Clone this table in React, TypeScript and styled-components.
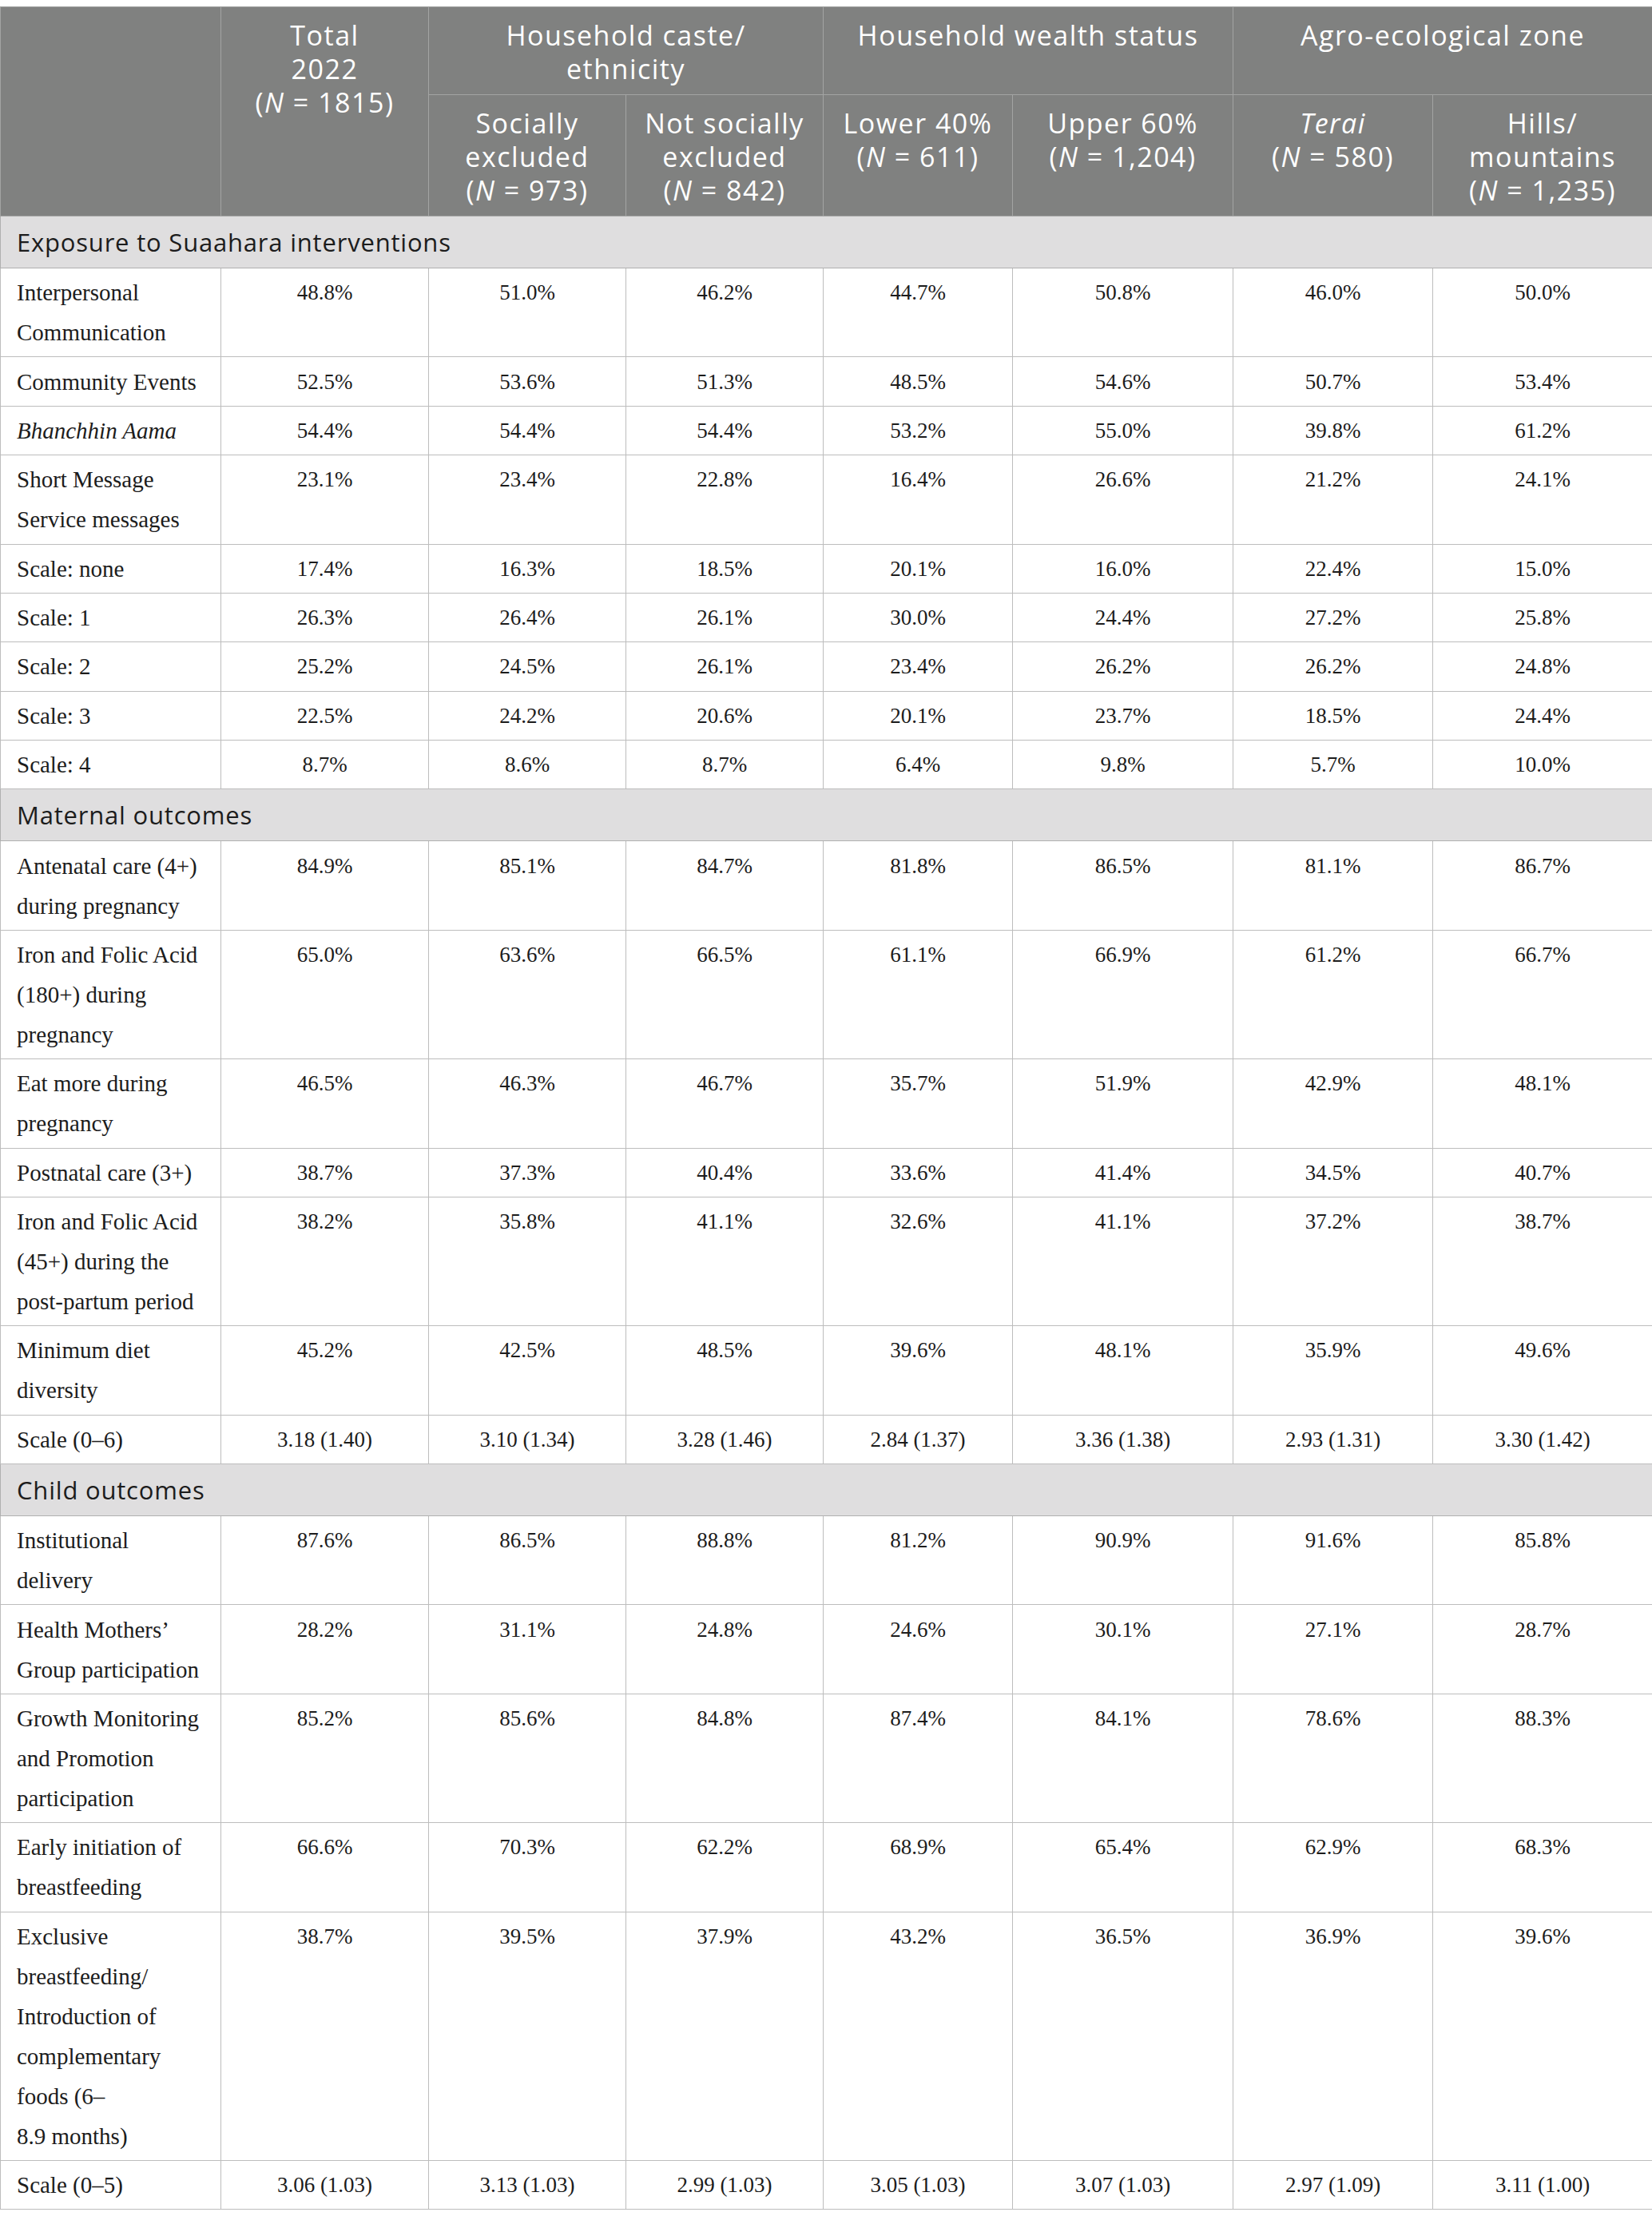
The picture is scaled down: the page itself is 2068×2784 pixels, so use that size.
import React from "react";
import styled, { createGlobalStyle } from "styled-components";

const GlobalStyle = createGlobalStyle`
  html, body {
    margin: 0;
    padding: 0;
    background: #ffffff;
  }
`;

const Page = styled.div`
  padding-top: 8px;
  width: 2068px;
`;

const Table = styled.table`
  width: 2068px;
  border-collapse: collapse;
  table-layout: fixed;
`;

const Col = styled.col<{ $w: number }>`
  width: ${(p) => p.$w}px;
`;

const HeadCell = styled.th`
  background: #808180;
  color: #ffffff;
  font-family: "Open Sans", "Noto Sans", sans-serif;
  font-weight: 400;
  font-size: 34px;
  letter-spacing: 1.5px;
  line-height: 42px;
  padding: 14px 8px 11px;
  text-align: center;
  vertical-align: top;
  border: 1px solid #a3a4a3;
`;

const SectionCell = styled.td`
  background: #dfdedf;
  color: #1c1c1c;
  font-family: "Open Sans", "Noto Sans", sans-serif;
  font-weight: 400;
  font-size: 31px;
  letter-spacing: 0.8px;
  line-height: 42px;
  padding: 11px 20px;
  text-align: left;
  vertical-align: top;
  border: 1px solid #b0b0b0;
`;

const BodyCell = styled.td<{ $label?: boolean }>`
  color: #1c1c1c;
  font-family: "Liberation Serif", "Times New Roman", serif;
  font-size: ${(p) => (p.$label ? "29px" : "27px")};
  line-height: 50px;
  padding: 5.2px 20px;
  text-align: ${(p) => (p.$label ? "left" : "center")};
  vertical-align: top;
  border: 1px solid #bdbdbd;
  background: #ffffff;
`;

const Em = styled.em`
  font-style: italic;
`;

type Row = { label: string[]; italic?: boolean; values: string[] };
type Section = { title: string; rows: Row[] };

const pct = (...v: number[]) => v.map((n) => `${n.toFixed(1)}%`);

const sections: Section[] = [
  {
    title: "Exposure to Suaahara interventions",
    rows: [
      { label: ["Interpersonal", "Communication"], values: pct(48.8, 51.0, 46.2, 44.7, 50.8, 46.0, 50.0) },
      { label: ["Community Events"], values: pct(52.5, 53.6, 51.3, 48.5, 54.6, 50.7, 53.4) },
      { label: ["Bhanchhin Aama"], italic: true, values: pct(54.4, 54.4, 54.4, 53.2, 55.0, 39.8, 61.2) },
      { label: ["Short Message", "Service messages"], values: pct(23.1, 23.4, 22.8, 16.4, 26.6, 21.2, 24.1) },
      { label: ["Scale: none"], values: pct(17.4, 16.3, 18.5, 20.1, 16.0, 22.4, 15.0) },
      { label: ["Scale: 1"], values: pct(26.3, 26.4, 26.1, 30.0, 24.4, 27.2, 25.8) },
      { label: ["Scale: 2"], values: pct(25.2, 24.5, 26.1, 23.4, 26.2, 26.2, 24.8) },
      { label: ["Scale: 3"], values: pct(22.5, 24.2, 20.6, 20.1, 23.7, 18.5, 24.4) },
      { label: ["Scale: 4"], values: pct(8.7, 8.6, 8.7, 6.4, 9.8, 5.7, 10.0) },
    ],
  },
  {
    title: "Maternal outcomes",
    rows: [
      { label: ["Antenatal care (4+)", "during pregnancy"], values: pct(84.9, 85.1, 84.7, 81.8, 86.5, 81.1, 86.7) },
      { label: ["Iron and Folic Acid", "(180+) during", "pregnancy"], values: pct(65.0, 63.6, 66.5, 61.1, 66.9, 61.2, 66.7) },
      { label: ["Eat more during", "pregnancy"], values: pct(46.5, 46.3, 46.7, 35.7, 51.9, 42.9, 48.1) },
      { label: ["Postnatal care (3+)"], values: pct(38.7, 37.3, 40.4, 33.6, 41.4, 34.5, 40.7) },
      { label: ["Iron and Folic Acid", "(45+) during the", "post-partum period"], values: pct(38.2, 35.8, 41.1, 32.6, 41.1, 37.2, 38.7) },
      { label: ["Minimum diet", "diversity"], values: pct(45.2, 42.5, 48.5, 39.6, 48.1, 35.9, 49.6) },
      {
        label: ["Scale (0\u20136)"],
        values: ["3.18 (1.40)", "3.10 (1.34)", "3.28 (1.46)", "2.84 (1.37)", "3.36 (1.38)", "2.93 (1.31)", "3.30 (1.42)"],
      },
    ],
  },
  {
    title: "Child outcomes",
    rows: [
      { label: ["Institutional", "delivery"], values: pct(87.6, 86.5, 88.8, 81.2, 90.9, 91.6, 85.8) },
      { label: ["Health Mothers\u2019", "Group participation"], values: pct(28.2, 31.1, 24.8, 24.6, 30.1, 27.1, 28.7) },
      { label: ["Growth Monitoring", "and Promotion", "participation"], values: pct(85.2, 85.6, 84.8, 87.4, 84.1, 78.6, 88.3) },
      { label: ["Early initiation of", "breastfeeding"], values: pct(66.6, 70.3, 62.2, 68.9, 65.4, 62.9, 68.3) },
      {
        label: ["Exclusive", "breastfeeding/", "Introduction of", "complementary", "foods (6\u2013", "8.9 months)"],
        values: pct(38.7, 39.5, 37.9, 43.2, 36.5, 36.9, 39.6),
      },
      {
        label: ["Scale (0\u20135)"],
        values: ["3.06 (1.03)", "3.13 (1.03)", "2.99 (1.03)", "3.05 (1.03)", "3.07 (1.03)", "2.97 (1.09)", "3.11 (1.00)"],
      },
    ],
  },
];

const colWidths = [276, 260, 247, 247, 237, 276, 250, 275];

const Lines: React.FC<{ lines: React.ReactNode[] }> = ({ lines }) => (
  <>
    {lines.map((l, i) => (
      <React.Fragment key={i}>
        {i > 0 && <br />}
        {l}
      </React.Fragment>
    ))}
  </>
);

const N = () => <Em>N</Em>;

export default function App() {
  return (
    <>
      <GlobalStyle />
      <Page>
        <Table>
          <colgroup>
            {colWidths.map((w, i) => (
              <Col key={i} $w={w} />
            ))}
          </colgroup>
          <thead>
            <tr>
              <HeadCell rowSpan={2} />
              <HeadCell rowSpan={2}>
                <Lines lines={["Total", "2022", <>(<N /> = 1815)</>]} />
              </HeadCell>
              <HeadCell colSpan={2}>
                <Lines lines={["Household caste/", "ethnicity"]} />
              </HeadCell>
              <HeadCell colSpan={2}>Household wealth status</HeadCell>
              <HeadCell colSpan={2}>Agro-ecological zone</HeadCell>
            </tr>
            <tr>
              <HeadCell>
                <Lines lines={["Socially", "excluded", <>(<N /> = 973)</>]} />
              </HeadCell>
              <HeadCell>
                <Lines lines={["Not socially", "excluded", <>(<N /> = 842)</>]} />
              </HeadCell>
              <HeadCell>
                <Lines lines={["Lower 40%", <>(<N /> = 611)</>]} />
              </HeadCell>
              <HeadCell>
                <Lines lines={["Upper 60%", <>(<N /> = 1,204)</>]} />
              </HeadCell>
              <HeadCell>
                <Lines lines={[<Em>Terai</Em>, <>(<N /> = 580)</>]} />
              </HeadCell>
              <HeadCell>
                <Lines lines={["Hills/", "mountains", <>(<N /> = 1,235)</>]} />
              </HeadCell>
            </tr>
          </thead>
          {sections.map((s) => (
            <tbody key={s.title}>
              <tr>
                <SectionCell colSpan={8}>{s.title}</SectionCell>
              </tr>
              {s.rows.map((r, ri) => (
                <tr key={ri}>
                  <BodyCell $label>
                    {r.italic ? <Em>{r.label.join(" ")}</Em> : <Lines lines={r.label} />}
                  </BodyCell>
                  {r.values.map((v, vi) => (
                    <BodyCell key={vi}>{v}</BodyCell>
                  ))}
                </tr>
              ))}
            </tbody>
          ))}
        </Table>
      </Page>
    </>
  );
}
